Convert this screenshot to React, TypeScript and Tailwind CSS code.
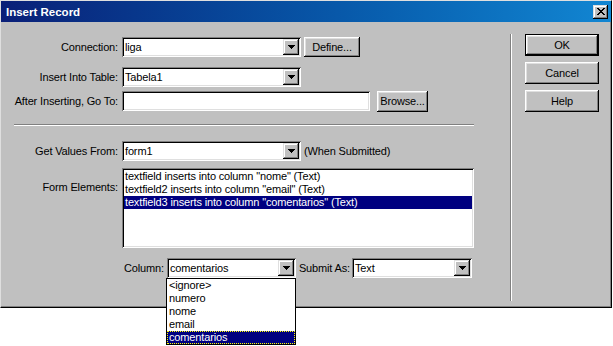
const raised = "shadow-[inset_-1px_-1px_#000,inset_1px_1px_#fff,inset_-2px_-2px_#808080,inset_2px_2px_#dfdfdf]";
const raisedSmall = "shadow-[inset_-1px_-1px_#000,inset_1px_1px_#dfdfdf,inset_-2px_-2px_#808080,inset_2px_2px_#fff]";
const sunken = "shadow-[inset_1px_1px_#808080,inset_-1px_-1px_#fff,inset_2px_2px_#000,inset_-2px_-2px_#dfdfdf]";

// little black triangle of the combo's drop button
const Arrow = () => (
	<svg width="7" height="4" viewBox="0 0 7 4" shapeRendering="crispEdges">
		<polygon points="0,0 7,0 3.5,4" fill="#000" />
	</svg>
);

const Combo = ({ value, className = "", children }: { value: string; className?: string; children?: React.ReactNode }) => (
	<div className={`relative flex h-[20px] items-center bg-white p-[2px] ${sunken} ${className}`}>
		<span className="flex-1 truncate pl-[1px] leading-[16px]">{value}</span>
		<span className={`flex h-[16px] w-[16px] items-center justify-center bg-[#c0c0c0] ${raisedSmall}`}>
			<Arrow />
		</span>
		{children}
	</div>
);

const Button = ({ label, className = "" }: { label: string; className?: string }) => (
	<button className={`flex items-center justify-center bg-[#c0c0c0] ${raised} ${className}`}>{label}</button>
);

const Label = ({ text, className = "" }: { text: string; className?: string }) => (
	<span className={`w-[117px] shrink-0 text-right ${className}`}>{text}</span>
);

const formElements = [
	'textfield inserts into column "nome" (Text)',
	'textfield2 inserts into column "email" (Text)',
	'textfield3 inserts into column "comentarios" (Text)',
];

const columns = ["<ignore>", "numero", "nome", "email", "comentarios"];

export default function App() {
	return (
		<div className="relative h-[346px] w-[613px] bg-white font-['Liberation_Sans',Arial,sans-serif] text-[11px] leading-[13px] tracking-[-0.15px] text-black">
			<div className="flex h-[308px] w-[612px] flex-col border border-t-[#dfdfdf] border-l-[#dfdfdf] border-b-black border-r-black bg-[#c0c0c0] shadow-[inset_-1px_-1px_#808080]">
				{/* title bar */}
				<div className="flex h-[21px] shrink-0 items-center justify-between bg-linear-to-r from-[#0a1f78] to-[#1286d2] pl-[5px] pr-[3px]">
					<span className="pt-[1px] text-[11.5px] font-bold tracking-normal text-white">Insert Record</span>
					<span className={`flex h-[14px] w-[15px] items-center justify-center bg-[#c0c0c0] ${raisedSmall}`}>
						<svg width="8" height="7" viewBox="0 0 8 7" shapeRendering="crispEdges" fill="#000">
							<rect x="0" y="0" width="2" height="1" />
							<rect x="6" y="0" width="2" height="1" />
							<rect x="1" y="1" width="2" height="1" />
							<rect x="5" y="1" width="2" height="1" />
							<rect x="2" y="2" width="4" height="1" />
							<rect x="3" y="3" width="2" height="1" />
							<rect x="2" y="4" width="4" height="1" />
							<rect x="1" y="5" width="2" height="1" />
							<rect x="5" y="5" width="2" height="1" />
							<rect x="0" y="6" width="2" height="1" />
							<rect x="6" y="6" width="2" height="1" />
						</svg>
					</span>
				</div>

				<div className="flex flex-1">
					{/* left: fields */}
					<div className="flex w-[509px] shrink-0 flex-col pt-[15px]">
						<div className="flex h-[20px] items-center">
							<Label text="Connection:" />
							<Combo value="liga" className="ml-[4px] w-[179px]" />
							<Button label="Define..." className="ml-[3px] h-[20px] w-[56px]" />
						</div>
						<div className="mt-[10px] flex h-[20px] items-center">
							<Label text="Insert Into Table:" />
							<Combo value="Tabela1" className="ml-[4px] w-[179px]" />
						</div>
						<div className="mt-[4px] flex h-[21px] items-start">
							<Label text="After Inserting, Go To:" className="leading-[20px]" />
							<div className={`ml-[4px] h-[20px] w-[248px] bg-white ${sunken}`} />
							<Button label="Browse..." className="ml-[7px] h-[21px] w-[51px]" />
						</div>

						<div className="ml-[13px] mt-[12px] h-[2px] w-[460px] border-t border-b border-t-[#808080] border-b-white" />

						<div className="mt-[15px] flex h-[20px] items-center">
							<Label text="Get Values From:" />
							<Combo value="form1" className="ml-[4px] w-[179px]" />
							<span className="ml-[3px]">(When Submitted)</span>
						</div>
						<div className="mt-[7px] flex items-start">
							<Label text="Form Elements:" className="pt-[13px]" />
							<div className={`ml-[4px] h-[80px] w-[352px] bg-white p-[2px] ${sunken}`}>
								{formElements.map((item, i) => (
									<div
										key={item}
										className={`h-[13px] whitespace-nowrap pl-[1px] ${i === 2 ? "bg-[#000080] text-white" : ""}`}
									>
										{item}
									</div>
								))}
							</div>
						</div>

						<div className="ml-[123px] mt-[10px] flex h-[20px] items-center">
							<span className="w-[43px] shrink-0">Column:</span>
							<Combo value="comentarios" className="w-[129px]">
								{/* open dropdown list */}
								<div className="absolute left-[-1px] top-[20px] z-10 w-[130px] border border-black bg-white">
									{columns.map((c, i) => (
										<div
											key={c}
											className={`h-[13px] pl-[2px] ${
												i === 4 ? "bg-[#000080] text-white outline-1 outline-dotted -outline-offset-1 outline-[#ffff00]" : ""
											}`}
										>
											{c}
										</div>
									))}
								</div>
							</Combo>
							<span className="w-[56px] shrink-0 pr-[2px] text-right">Submit As:</span>
							<Combo value="Text" className="w-[120px]" />
						</div>
					</div>

					{/* vertical separator */}
					<div className="mt-[12px] h-[267px] w-[2px] shrink-0 self-start border-l border-r border-l-[#808080] border-r-white" />

					{/* right: buttons */}
					<div className="ml-[13px] flex flex-col gap-[6px] pt-[12px]">
						<button className={`flex h-[22px] w-[74px] items-center justify-center border border-black bg-[#c0c0c0] ${raised}`}>
							OK
						</button>
						<Button label="Cancel" className="h-[22px] w-[74px]" />
						<Button label="Help" className="h-[22px] w-[74px]" />
					</div>
				</div>
			</div>
		</div>
	);
}
